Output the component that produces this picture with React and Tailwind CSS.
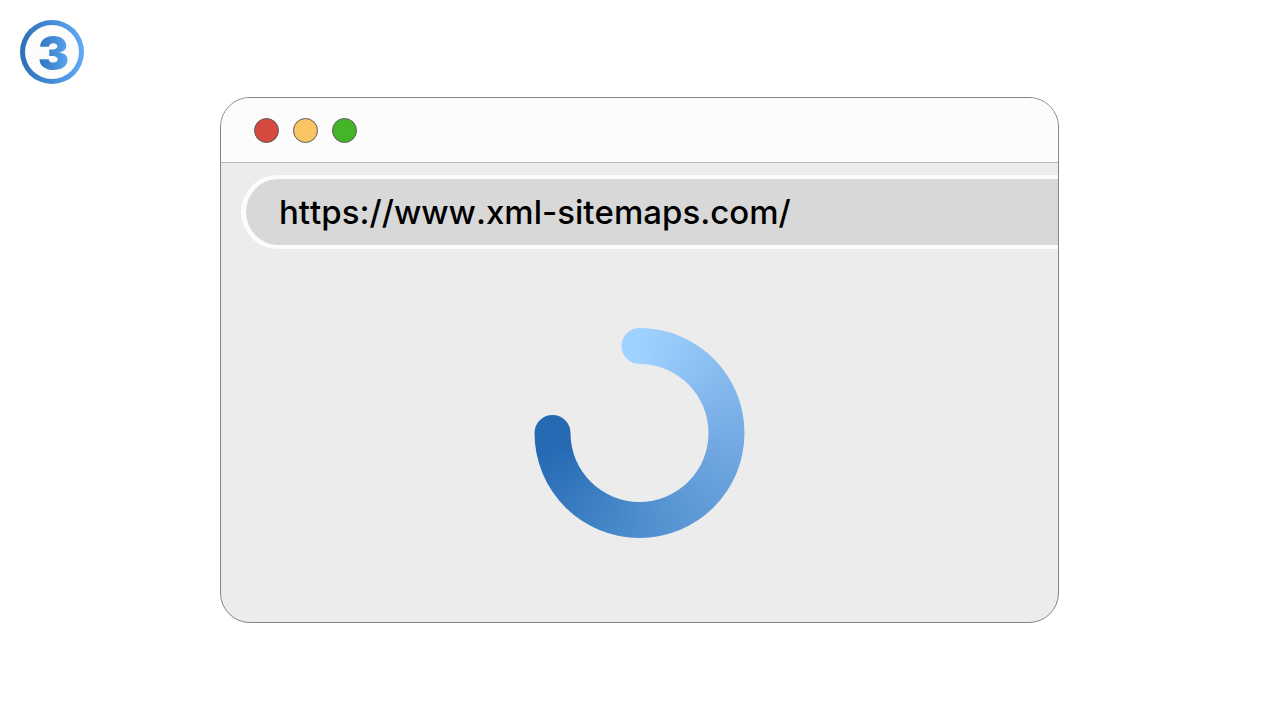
import React from 'react';

const dots = [
  { label: 'Close', color: 'bg-[#d6493f]' },
  { label: 'Minimize', color: 'bg-[#f9c463]' },
  { label: 'Maximize', color: 'bg-[#45b527]' },
];

const StepBadge = ({ step }) => (
  <div className="w-16 h-16 rounded-full p-[5px] bg-linear-to-r from-[#2a6fb8] to-[#60aaf6]">
    <div className="w-full h-full rounded-full bg-[#fcfcfc] pl-[3px] flex items-center justify-center">
      <span className="text-[47px] leading-none font-black [font-optical-sizing:none] text-transparent bg-clip-text bg-linear-to-r from-[#2f74bd] to-[#5ba4ef]">
        {step}
      </span>
    </div>
  </div>
);

// Open ring with round ends, cut out of a conic gradient
const Spinner = () => (
  <div
    role="img"
    aria-label="Loading"
    className="w-[212px] h-[212px] bg-[conic-gradient(#a0d2ff_0deg,#76abe5_90deg,#4e8ecd_180deg,#256ab3_260deg,#256ab3_300deg,#a0d2ff_300deg)] [clip-path:path('M106_1A105_105_0_1_1_1_106A18_18_0_0_1_37_106A69_69_0_1_0_106_37A18_18_0_0_1_106_1Z')]"
  />
);

const BrowserWindow = ({ url }) => (
  <section className="w-full max-w-[839px] rounded-[30px] border border-[#858585] bg-[#ececec] overflow-hidden">
    <div className="h-[65px] pl-[33px] flex items-center gap-[14px] bg-[#fcfcfc] border-b border-[#b5b5b5]">
      {dots.map((dot) => (
        <button
          key={dot.label}
          type="button"
          aria-label={dot.label}
          className={`w-[25px] h-[25px] rounded-full border border-[#5c5c5c] ${dot.color}`}
        />
      ))}
    </div>

    <div className="pt-3 pl-5">
      <input
        type="text"
        aria-label="Address"
        defaultValue={url}
        className="block w-full h-[74px] pl-[33px] rounded-l-full border-4 border-l-[5px] border-r-0 border-[#fcfcfc] bg-[#d8d8d8] text-[33px] font-medium [font-optical-sizing:none] [font-kerning:none] text-black outline-none"
      />
    </div>

    <div className="pt-[78px] pb-[83px] flex justify-center">
      <Spinner />
    </div>
  </section>
);

const App = () => {
  return (
    <div className="min-h-screen bg-white font-['Inter',sans-serif]">
      <header className="pt-5 pl-5">
        <StepBadge step={3} />
      </header>
      <main className="mt-[13px] px-6 flex justify-center">
        <BrowserWindow url="https://www.xml-sitemaps.com/" />
      </main>
    </div>
  );
};

export default App;
